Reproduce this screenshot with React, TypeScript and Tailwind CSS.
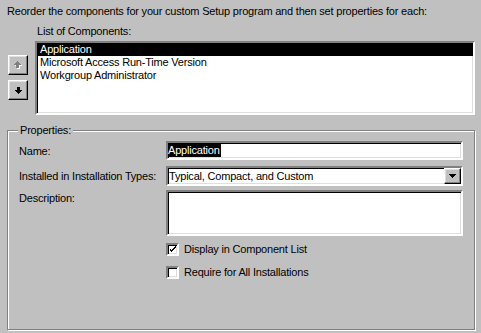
import React from "react";

const sunken =
  "border-2 border-t-[#808080] border-l-[#808080] border-b-white border-r-white shadow-[inset_1px_1px_0_#000,inset_-1px_-1px_0_#dfdfdf]";
const raised =
  "border border-t-white border-l-white border-b-black border-r-black shadow-[inset_-1px_-1px_0_#808080,inset_1px_1px_0_#dfdfdf]";

function ArrowUp({ disabled }: { disabled?: boolean }) {
  const fill = disabled ? "#808080" : "#000";
  return (
    <svg width="8" height="8" viewBox="0 0 8 8" shapeRendering="crispEdges">
      {disabled && (
        <g fill="#fff" transform="translate(1 1)">
          <rect x="3" y="0" width="1" height="1" />
          <rect x="2" y="1" width="3" height="1" />
          <rect x="1" y="2" width="5" height="1" />
          <rect x="0" y="3" width="7" height="1" />
          <rect x="2" y="4" width="3" height="3" />
        </g>
      )}
      <g fill={fill}>
        <rect x="3" y="0" width="1" height="1" />
        <rect x="2" y="1" width="3" height="1" />
        <rect x="1" y="2" width="5" height="1" />
        <rect x="0" y="3" width="7" height="1" />
        <rect x="2" y="4" width="3" height="3" />
      </g>
    </svg>
  );
}

function ArrowDown() {
  return (
    <svg width="7" height="7" viewBox="0 0 7 7" shapeRendering="crispEdges">
      <g fill="#000">
        <rect x="2" y="0" width="3" height="3" />
        <rect x="0" y="3" width="7" height="1" />
        <rect x="1" y="4" width="5" height="1" />
        <rect x="2" y="5" width="3" height="1" />
        <rect x="3" y="6" width="1" height="1" />
      </g>
    </svg>
  );
}

function Checkbox({ checked, label }: { checked?: boolean; label: string }) {
  return (
    <div className="flex items-center gap-[5px]">
      <div className={`w-[13px] h-[13px] bg-white flex items-center justify-center ${sunken}`}>
        {checked && (
          <svg width="7" height="7" viewBox="0 0 7 7" shapeRendering="crispEdges">
            <path d="M0 2h1v3h1v1h1v-1h1v-1h1v-1h1v-1h1v-2h-1v1h-1v1h-1v1h-1v1h-1v-1h-1v-1z" fill="#000" />
          </svg>
        )}
      </div>
      <span>{label}</span>
    </div>
  );
}

export default function App() {
  const items = ["Application", "Microsoft Access Run-Time Version", "Workgroup Administrator"];
  return (
    <div className="w-[481px] h-[333px] overflow-hidden bg-[#c0c0c0] text-black text-[11px] leading-[13px] tracking-[-0.2px] font-['Liberation_Sans',Arial,sans-serif]">
      <p className="pt-[5px] pl-[7px]">
        Reorder the components for your custom Setup program and then set properties for each:
      </p>

      <div className="flex mt-[7px]">
        <div className="flex flex-col gap-[5px] pl-[8px] pt-[30px] w-[35px]">
          <button className={`w-[20px] h-[20px] bg-[#c0c0c0] flex items-center justify-center ${raised}`}>
            <ArrowUp disabled />
          </button>
          <button className={`w-[20px] h-[20px] bg-[#c0c0c0] flex items-center justify-center ${raised}`}>
            <ArrowDown />
          </button>
        </div>
        <div className="flex flex-col">
          <span className="pl-[2px]">List of Components:</span>
          <div className={`mt-[3px] w-[440px] h-[74px] bg-white ${sunken}`}>
            {items.map((it, i) => (
              <div
                key={it}
                className={`h-[13px] pl-[3px] ${i === 0 ? "bg-black text-white" : ""}`}
              >
                {it}
              </div>
            ))}
          </div>
        </div>
      </div>

      <fieldset className="ml-[7px] mt-[9px] w-[466px] h-[206px] border border-[#808080] shadow-[inset_1px_1px_0_#fff,1px_1px_0_#fff] px-[11px] pt-[4px]">
        <legend className="-ml-[1px] px-[2px] bg-[#c0c0c0]">Properties:</legend>
        <div className="grid grid-cols-[147px_297px] gap-y-[6px] items-start">
          <span className="pt-[4px]">Name:</span>
          <div className={`h-[19px] bg-white flex items-center ${sunken}`}>
            <span className="bg-black text-white pr-[1px]">Application</span>
          </div>

          <span className="pt-[4px]">Installed in Installation Types:</span>
          <div className={`h-[20px] bg-white flex items-center justify-between ${sunken}`}>
            <span className="pl-[1px]">Typical, Compact, and Custom</span>
            <div className={`w-[17px] h-[16px] bg-[#c0c0c0] flex items-center justify-center ${raised}`}>
              <svg width="7" height="4" viewBox="0 0 7 4" shapeRendering="crispEdges">
                <path d="M0 0h7v1h-1v1h-1v1h-1v1h-1v-1h-1v-1h-1v-1h-1z" fill="#000" />
              </svg>
            </div>
          </div>

          <span className="pt-[2px] -mt-[2px]">Description:</span>
          <div className={`h-[46px] bg-white -mt-[2px] ${sunken}`} />

          <span />
          <div className="flex flex-col gap-[10px] mt-[1px]">
            <Checkbox checked label="Display in Component List" />
            <Checkbox label="Require for All Installations" />
          </div>
        </div>
      </fieldset>
    </div>
  );
}
